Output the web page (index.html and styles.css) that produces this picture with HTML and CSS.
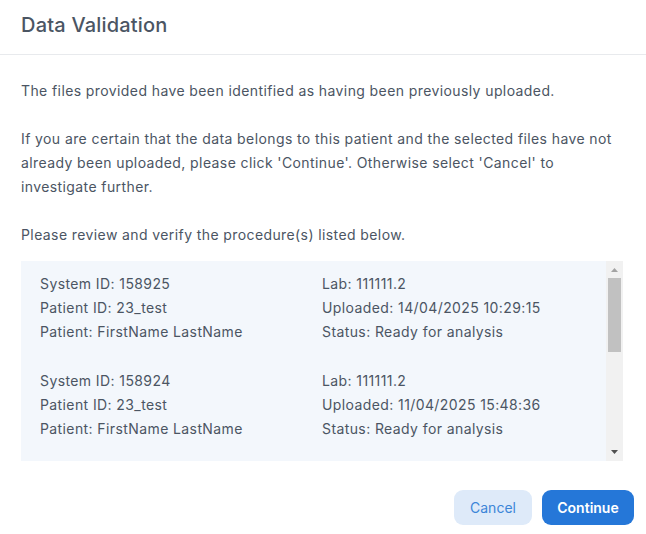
FILE: index.html
```html
<!DOCTYPE html>
<html lang="en">
<head>
<meta charset="utf-8">
<title>Data Validation</title>
<link rel="stylesheet" href="styles.css">
</head>
<body>
<div class="dialog">
  <header class="dialog-header">
    <h1 class="dialog-title">Data Validation</h1>
  </header>
  <div class="dialog-body">
    <p class="msg">The files provided have been identified as having been previously uploaded.</p>
    <p class="msg">If you are certain that the data belongs to this patient and the selected files have not already been uploaded, please click 'Continue'. Otherwise select 'Cancel' to investigate further.</p>
    <p class="msg msg-review">Please review and verify the procedure(s) listed below.</p>
    <div class="list">
      <div class="list-content">
        <div class="item">
          <div class="col">
            <div>System ID: 158925</div>
            <div>Patient ID: 23_test</div>
            <div>Patient: FirstName LastName</div>
          </div>
          <div class="col">
            <div>Lab: 111111.2</div>
            <div>Uploaded: 14/04/2025 10:29:15</div>
            <div>Status: Ready for analysis</div>
          </div>
        </div>
        <div class="item">
          <div class="col">
            <div>System ID: 158924</div>
            <div>Patient ID: 23_test</div>
            <div>Patient: FirstName LastName</div>
          </div>
          <div class="col">
            <div>Lab: 111111.2</div>
            <div>Uploaded: 11/04/2025 15:48:36</div>
            <div>Status: Ready for analysis</div>
          </div>
        </div>
      </div>
      <div class="scrollbar" aria-hidden="true">
        <div class="sb-btn">
          <svg width="17" height="17" viewBox="0 0 17 17"><polygon points="5,11 12,11 8.5,7" fill="#a3a3a3"/></svg>
        </div>
        <div class="sb-track"><div class="sb-thumb"></div></div>
        <div class="sb-btn">
          <svg width="17" height="17" viewBox="0 0 17 17"><polygon points="5,6 12,6 8.5,10" fill="#505050"/></svg>
        </div>
      </div>
    </div>
  </div>
  <footer class="dialog-footer">
    <button class="btn btn-cancel" type="button">Cancel</button>
    <button class="btn btn-continue" type="button">Continue</button>
  </footer>
</div>
</body>
</html>
```
FILE: styles.css
```css
* { box-sizing: border-box; }
html, body { margin: 0; padding: 0; background: #ffffff; }
body {
  font-family: "Inter", "Noto Sans", sans-serif;
  color: #4b5563;
  font-size: 14px;
}
.dialog { width: 646px; }
.dialog-header {
  height: 55px;
  padding: 0 21px;
  border-bottom: 1px solid #e8eaed;
  display: flex;
  align-items: center;
}
.dialog-title {
  margin: 0 0 4px 0;
  font-size: 20px;
  font-weight: 500;
  letter-spacing: 0.2px;
  color: #4b5563;
  line-height: 24px;
}
.dialog-body { padding: 24px 23px 0 21px; }
.msg {
  margin: 0 0 24px 0;
  line-height: 24px;
  letter-spacing: 0.4px;
}
.msg-review { margin-bottom: 14px; }
.list {
  display: flex;
  height: 200px;
  background: #f3f7fc;
}
.list-content {
  flex: 1;
  overflow: hidden;
  padding: 11px 0 0 19px;
}
.item {
  display: grid;
  grid-template-columns: 282px 1fr;
  line-height: 24px;
  letter-spacing: 0.4px;
  margin-bottom: 25px;
}
.scrollbar {
  width: 17px;
  display: flex;
  flex-direction: column;
  background: #f1f1f1;
}
.sb-btn { height: 17px; flex: none; }
.sb-btn svg { display: block; }
.sb-track {
  flex: 1;
  padding: 0 2px;
}
.sb-thumb {
  height: 74px;
  background: #c1c1c1;
}
.dialog-footer {
  display: flex;
  justify-content: flex-end;
  gap: 10px;
  padding: 29px 12px 0 0;
}
.btn {
  font-family: "Inter", "Noto Sans", sans-serif;
  font-size: 14px;
  height: 35px;
  border: none;
  border-radius: 9px;
  padding: 0;
  cursor: pointer;
}
.btn-cancel {
  width: 78px;
  background: #deeaf9;
  color: #3c85d8;
}
.btn-continue {
  width: 92px;
  background: #2577d8;
  color: #ffffff;
  font-weight: 600;
}
```
